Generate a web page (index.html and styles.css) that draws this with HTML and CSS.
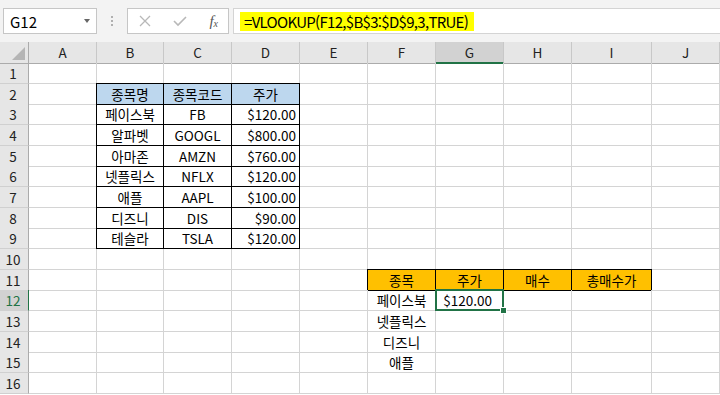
FILE: index.html
```html
<!DOCTYPE html>
<html lang="ko">
<head>
<meta charset="UTF-8">
<title>VLOOKUP</title>
<link rel="stylesheet" href="styles.css">
</head>
<body>
<div class="toolbar">
    <div class="namebox"><span>G12</span><span class="arrow"></span></div>
    <div class="dots">
        <svg width="4" height="12" viewBox="0 0 4 12"><circle cx="2" cy="2" r="1" fill="#9a9a9a"/><circle cx="2" cy="6" r="1" fill="#9a9a9a"/><circle cx="2" cy="10" r="1" fill="#9a9a9a"/></svg>
    </div>
    <div class="fxbox">
        <svg width="12" height="12" viewBox="0 0 12 12"><path d="M1 1 L11 11 M11 1 L1 11" stroke="#b8b8b8" stroke-width="1.3" fill="none"/></svg>
        <svg width="14" height="12" viewBox="0 0 14 12"><path d="M1 6 L5 10 L13 2" stroke="#b8b8b8" stroke-width="1.6" fill="none"/></svg>
        <span class="fx"><i>f</i><sub>x</sub></span>
    </div>
    <div class="formula"><span class="hl">=VLOOKUP(F12,$B$3:$D$9,3,TRUE)</span></div>
</div>

<div class="sheet">
    <div class="row head">
        <div class="corner"></div><div class="ch">A</div><div class="ch">B</div><div class="ch">C</div><div class="ch">D</div><div class="ch">E</div><div class="ch">F</div><div class="ch selcol">G</div><div class="ch">H</div><div class="ch">I</div><div class="ch">J</div>
    </div>
    <div class="row">
        <div class="rh">1</div><div class="c"></div><div class="c"></div><div class="c"></div><div class="c"></div><div class="c"></div><div class="c"></div><div class="c"></div><div class="c"></div><div class="c"></div><div class="c"></div>
    </div>
    <div class="row">
        <div class="rh">2</div><div class="c"></div><div class="c t blue tl tt center">종목명</div><div class="c t blue tt center">종목코드</div><div class="c t blue tt center">주가</div><div class="c"></div><div class="c"></div><div class="c"></div><div class="c"></div><div class="c"></div><div class="c"></div>
    </div>
    <div class="row">
        <div class="rh">3</div><div class="c"></div><div class="c t tl center">페이스북</div><div class="c t center">FB</div><div class="c t right">$120.00</div><div class="c"></div><div class="c"></div><div class="c"></div><div class="c"></div><div class="c"></div><div class="c"></div>
    </div>
    <div class="row">
        <div class="rh">4</div><div class="c"></div><div class="c t tl center">알파벳</div><div class="c t center">GOOGL</div><div class="c t right">$800.00</div><div class="c"></div><div class="c"></div><div class="c"></div><div class="c"></div><div class="c"></div><div class="c"></div>
    </div>
    <div class="row">
        <div class="rh">5</div><div class="c"></div><div class="c t tl center">아마존</div><div class="c t center">AMZN</div><div class="c t right">$760.00</div><div class="c"></div><div class="c"></div><div class="c"></div><div class="c"></div><div class="c"></div><div class="c"></div>
    </div>
    <div class="row">
        <div class="rh">6</div><div class="c"></div><div class="c t tl center">넷플릭스</div><div class="c t center">NFLX</div><div class="c t right">$120.00</div><div class="c"></div><div class="c"></div><div class="c"></div><div class="c"></div><div class="c"></div><div class="c"></div>
    </div>
    <div class="row">
        <div class="rh">7</div><div class="c"></div><div class="c t tl center">애플</div><div class="c t center">AAPL</div><div class="c t right">$100.00</div><div class="c"></div><div class="c"></div><div class="c"></div><div class="c"></div><div class="c"></div><div class="c"></div>
    </div>
    <div class="row">
        <div class="rh">8</div><div class="c"></div><div class="c t tl center">디즈니</div><div class="c t center">DIS</div><div class="c t right">$90.00</div><div class="c"></div><div class="c"></div><div class="c"></div><div class="c"></div><div class="c"></div><div class="c"></div>
    </div>
    <div class="row">
        <div class="rh">9</div><div class="c"></div><div class="c t tl center">테슬라</div><div class="c t center">TSLA</div><div class="c t right">$120.00</div><div class="c"></div><div class="c"></div><div class="c"></div><div class="c"></div><div class="c"></div><div class="c"></div>
    </div>
    <div class="row">
        <div class="rh">10</div><div class="c"></div><div class="c"></div><div class="c"></div><div class="c"></div><div class="c"></div><div class="c"></div><div class="c"></div><div class="c"></div><div class="c"></div><div class="c"></div>
    </div>
    <div class="row">
        <div class="rh">11</div><div class="c"></div><div class="c"></div><div class="c"></div><div class="c"></div><div class="c"></div><div class="c t orange tl tt center">종목</div><div class="c t orange tt center">주가</div><div class="c t orange tt center">매수</div><div class="c t orange tt center">총매수가</div><div class="c"></div>
    </div>
    <div class="row">
        <div class="rh selrow">12</div><div class="c"></div><div class="c"></div><div class="c"></div><div class="c"></div><div class="c"></div><div class="c center">페이스북</div><div class="c right sel">$120.00</div><div class="c"></div><div class="c"></div><div class="c"></div>
    </div>
    <div class="row">
        <div class="rh">13</div><div class="c"></div><div class="c"></div><div class="c"></div><div class="c"></div><div class="c"></div><div class="c center">넷플릭스</div><div class="c"></div><div class="c"></div><div class="c"></div><div class="c"></div>
    </div>
    <div class="row">
        <div class="rh">14</div><div class="c"></div><div class="c"></div><div class="c"></div><div class="c"></div><div class="c"></div><div class="c center">디즈니</div><div class="c"></div><div class="c"></div><div class="c"></div><div class="c"></div>
    </div>
    <div class="row">
        <div class="rh">15</div><div class="c"></div><div class="c"></div><div class="c"></div><div class="c"></div><div class="c"></div><div class="c center">애플</div><div class="c"></div><div class="c"></div><div class="c"></div><div class="c"></div>
    </div>
    <div class="row">
        <div class="rh">16</div><div class="c"></div><div class="c"></div><div class="c"></div><div class="c"></div><div class="c"></div><div class="c"></div><div class="c"></div><div class="c"></div><div class="c"></div><div class="c"></div>
    </div>
</div>
</body>
</html>
```

FILE: styles.css
```css
body {
    margin: 0;
    width: 720px;
    height: 395px;
    overflow: hidden;
    background: #ffffff;
    font-family: "Noto Sans CJK KR", "Noto Sans", sans-serif;
    color: #000000;
}

/* formula bar */
.toolbar {
    height: 42px;
    box-sizing: border-box;
    padding-top: 8px;
    background: #f3f3f3;
    display: flex;
    align-items: flex-start;
}
.namebox {
    margin-left: 3px;
    width: 94px;
    height: 26px;
    box-sizing: border-box;
    background: #ffffff;
    border: 1px solid #c6c6c6;
    display: flex;
    align-items: center;
    justify-content: space-between;
    padding: 0 6px 0 6px;
    font-size: 15px;
}
.arrow {
    width: 0;
    height: 0;
    border-left: 3.5px solid transparent;
    border-right: 3.5px solid transparent;
    border-top: 4px solid #666666;
}
.dots {
    width: 30px;
    height: 26px;
    display: flex;
    align-items: center;
    justify-content: center;
}
.fxbox {
    width: 102px;
    height: 26px;
    box-sizing: border-box;
    background: #ffffff;
    border: 1px solid #c6c6c6;
    display: flex;
    align-items: center;
    justify-content: space-between;
    padding: 0 10px 0 11px;
}
.fx {
    font-family: "Liberation Serif", serif;
    font-size: 15px;
    color: #555555;
    line-height: 1;
}
.fx sub {
    font-size: 10px;
    font-style: italic;
    vertical-align: -1px;
}
.formula {
    margin-left: 4px;
    flex: 1;
    height: 26px;
    box-sizing: border-box;
    background: #ffffff;
    border: 1px solid #d4d4d4;
    border-right: none;
    padding-left: 6px;
    display: flex;
    align-items: center;
}
.hl {
    background: #ffff00;
    font-size: 15px;
    letter-spacing: -0.7px;
    line-height: 19px;
    padding: 0 6px 0 4px;
}

/* grid */
.row {
    display: grid;
    grid-template-columns: 29px 68px 67px 68px 68px 68px 68px 68px 68px 80px 68px;
    height: 20.67px;
}
.row.head {
    height: 21px;
}
.corner, .ch, .rh {
    background: #e6e6e6;
    box-sizing: border-box;
    font-size: 13.5px;
    color: #222222;
}
.corner {
    position: relative;
    border-right: 1px solid #ababab;
    border-bottom: 1px solid #ababab;
}
.corner::after {
    content: "";
    position: absolute;
    right: 3px;
    bottom: 3px;
    width: 0;
    height: 0;
    border-left: 13px solid transparent;
    border-bottom: 13px solid #b5b5b5;
}
.ch {
    text-align: center;
    line-height: 20px;
    border-right: 1px solid #c8c8c8;
    border-bottom: 1px solid #ababab;
}
.selcol {
    background: #d2d2d2;
    border-bottom: 2px solid #217346;
}
.rh {
    text-align: center;
    line-height: 20px;
    padding-right: 2px;
    border-right: 1px solid #ababab;
    border-bottom: 1px solid #d0d0d0;
}
.selrow {
    background: #d2d2d2;
    color: #217346;
    border-right: 1px solid #217346;
}
.c {
    box-sizing: border-box;
    border-right: 1px solid #d4d4d4;
    border-bottom: 1px solid #d4d4d4;
    font-size: 13.5px;
    line-height: 20px;
    padding: 0 3px;
    white-space: nowrap;
}
.center { text-align: center; }
.right { text-align: right; }

/* bordered tables */
.t {
    border-right-color: #000000;
    border-bottom-color: #000000;
}
.tl { box-shadow: -1px 0 0 #000000; }
.tt { box-shadow: 0 -1px 0 #000000; }
.tl.tt { box-shadow: -1px 0 0 #000000, 0 -1px 0 #000000, -1px -1px 0 #000000; }
.blue { background: #bdd7ee; }
.orange { background: #ffc000; }

/* active cell */
.sel {
    position: relative;
    padding-right: 11px;
}
.sel::before {
    content: "";
    position: absolute;
    left: -1px;
    top: -1px;
    right: -1px;
    bottom: -1px;
    border: 2px solid #217346;
    z-index: 2;
}
.sel::after {
    content: "";
    position: absolute;
    right: -4px;
    bottom: -4px;
    width: 5px;
    height: 5px;
    background: #217346;
    border: 1px solid #ffffff;
    z-index: 3;
}
```
